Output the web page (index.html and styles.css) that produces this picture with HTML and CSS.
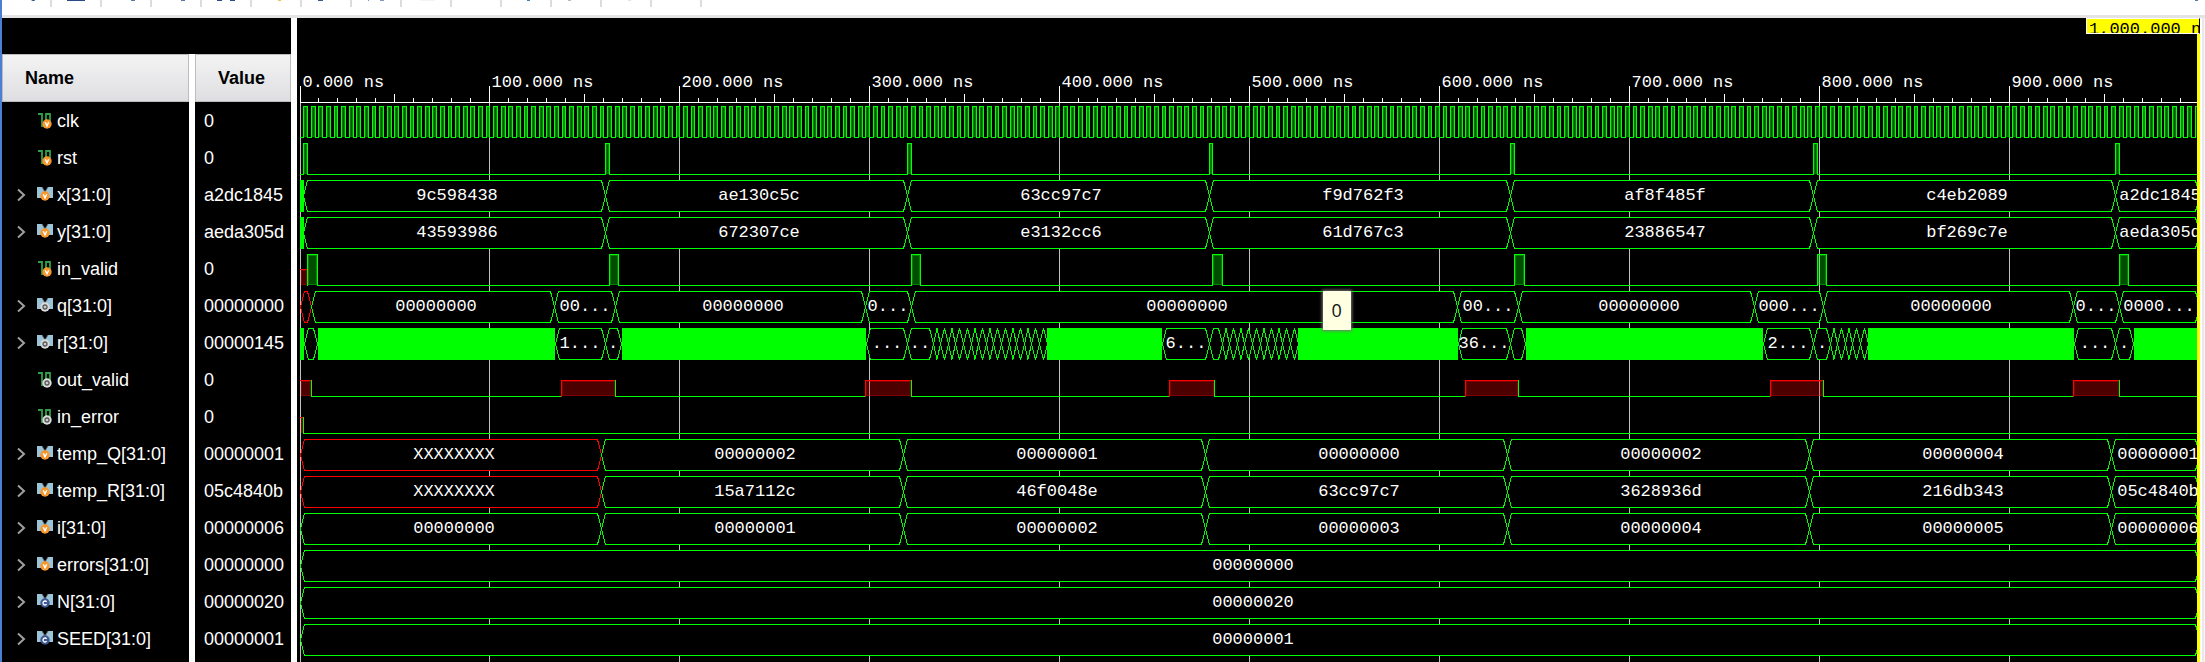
FILE: index.html
```html
<!DOCTYPE html>
<html lang="en">
<head>
<meta charset="utf-8">
<title>Waveform viewer</title>
<link rel="stylesheet" href="styles.css">
</head>
<body>
<svg class="defs" aria-hidden="true">
  <symbol id="chevron" viewBox="0 0 10 14"><path d="M1 1.500 7 7 1 12.500" fill="none" stroke="#a0a0a0" stroke-width="2"/></symbol>
  <symbol id="scalar" viewBox="0 0 18 18"><path d="M1 2H5V14H9V2H13V12" fill="none" stroke="#2fa048" stroke-width="1.800"/></symbol>
  <symbol id="bus" viewBox="0 0 18 18"><path d="M0 1H5L8 6 11 1H16V12H12V9H4V12H0Z" fill="#9cc4d8"/><path d="M5 1 8 6 11 1" fill="none" stroke="#5b6a72"/></symbol>
  <symbol id="badge-var" viewBox="0 0 10 10"><circle cx="5" cy="5" r="4.700" fill="#f7962a"/><path d="M3.300 3.200 5 6.900 6.700 3.200" fill="none" stroke="#fff" stroke-width="1.400"/></symbol>
  <symbol id="badge-net" viewBox="0 0 10 10"><circle cx="5" cy="5" r="4.700" fill="#dadada"/><circle cx="5" cy="5" r="2" fill="#ccc" stroke="#5a5a5a" stroke-width="1.300"/></symbol>
  <symbol id="badge-const" viewBox="0 0 10 10"><circle cx="5" cy="5" r="4.700" fill="#3d5890"/><path d="M6.600 3.800A2 2 0 1 0 6.600 6.200" fill="none" stroke="#fff" stroke-width="1.300"/></symbol>
</svg>
<div class="viewer">
  <div class="toolbar" role="toolbar" aria-label="Waveform tools">
    <button class="tool" aria-label="Search"><svg class="glyph" viewBox="0 0 48 1"><path d="M29.500.5H33" stroke="#6f88b8"/><path d="M30.500.5H32" stroke="#2b4a8a"/></svg></button>
    <button class="tool" aria-label="Save"><svg class="glyph" viewBox="0 0 48 1"><path d="M15 .5H33" stroke="#2b4a8a"/></svg></button>
    <button class="tool" aria-label="Zoom in"><svg class="glyph" viewBox="0 0 48 1"><path d="M29 .5H33" stroke="#5b76ac"/></svg></button>
    <button class="tool" aria-label="Zoom out"><svg class="glyph" viewBox="0 0 48 1"><path d="M29 .5H33" stroke="#5b76ac"/></svg></button>
    <button class="tool" aria-label="Zoom fit"><svg class="glyph" viewBox="0 0 48 1"><path d="M15 .5H20M28 .5H33" stroke="#2b4a8a"/></svg></button>
    <button class="tool" aria-label="Zoom to cursor"><svg class="glyph" viewBox="0 0 48 1"><path d="M26 .5H29" stroke="#e6c75a"/></svg></button>
    <button class="tool" aria-label="Previous transition"><svg class="glyph" viewBox="0 0 48 1"><path d="M16 .5H21" stroke="#3d5994"/></svg></button>
    <button class="tool" aria-label="Next transition"><svg class="glyph" viewBox="0 0 48 1"><path d="M16 .5H17M28 .5H32" stroke="#8496bd"/></svg></button>
    <button class="tool" aria-label="Add marker"><svg class="glyph" viewBox="0 0 48 1"><path d="M18 .5H33" stroke="#f4f4f4"/></svg></button>
    <button class="tool" aria-label="Previous marker"></button>
    <button class="tool" aria-label="Next marker"><svg class="glyph" viewBox="0 0 48 1"><path d="M25 .5H28" stroke="#3a84c0"/></svg></button>
    <button class="tool" aria-label="Swap cursors"><svg class="glyph" viewBox="0 0 48 1"><path d="M16 .5H19" stroke="#bbb"/></svg></button>
    <button class="tool" aria-label="Snap"><svg class="glyph" viewBox="0 0 48 1"><path d="M26 .5H29" stroke="#e4e4e4"/></svg></button>
    <button class="tool" aria-label="Float rulers"></button>
    <button class="tool settings" aria-label="Settings"><svg class="glyph" viewBox="0 0 48 1"><path d="M40 .5H43" stroke="#5b76ac"/></svg></button>
  </div>
  <main class="content">
    <section class="signals">
      <table class="signal-table">
        <thead><tr><th class="name-head">Name</th><th class="value-head">Value</th></tr></thead>
        <tbody id="signal-rows"></tbody>
      </table>
    </section>
    <section class="waves" id="waves" aria-label="Waveforms">
      <svg class="plot" id="plot"></svg>
      <div class="cursor-label"><span>1,000.000 ns</span></div>
      <div class="tooltip" role="tooltip">0</div>
    </section>
    <div class="edge"></div>
  </main>
</div>
<script src="waves.js"></script>
</body>
</html>
```
FILE: styles.css
```css
* { box-sizing: border-box; }
body {
  margin: 0;
  background: #fff;
  font: 18px/20px "Liberation Sans", Arial, sans-serif;
  overflow: hidden;
}
.defs { position: absolute; width: 0; height: 0; }
.viewer {
  display: flex;
  flex-direction: column;
  height: 100vh;
  border-left: 2px solid #4a7fd4;
}
.toolbar {
  display: flex;
  align-items: flex-start;
  height: 18px;
  flex: none;
  background: #fff;
  border-bottom: 3px solid #e4e4e4;
}
.tool {
  width: 50px;
  height: 7px;
  padding: 0;
  border: 0;
  border-right: 2px solid #dcdcdc;
  background: none;
  display: flex;
}
.settings { margin-left: auto; border-right: 0; }
.glyph { display: block; width: 48px; height: 1px; }
.content { display: flex; flex: 1; min-height: 0; }
.signals {
  flex: none;
  width: 289px;
  background: #000;
  padding-top: 36px;
  display: flex;
}
.signal-table {
  width: 100%;
  height: 100%;
  border-collapse: separate;
  border-spacing: 0;
  table-layout: fixed;
  color: #fff;
}
.signal-table th {
  height: 48px;
  padding: 0 0 0 23px;
  text-align: left;
  color: #000;
  background: linear-gradient(#f4f4f4, #dedee2);
  box-shadow: inset 0 0 0 1px #bcbcbc;
}
.signal-table .name-head {
  width: 193px;
  border-right: 6px solid #fff;
  background-clip: padding-box;
}
.signal-table td { padding: 0 0 0 9px; height: 37px; white-space: nowrap; }
.signal-table td:first-child { border-right: 6px solid #fff; padding-left: 15px; }
.signal-table .filler td { height: auto; padding: 0; }
.signal { display: flex; align-items: center; }
.expand {
  width: 10px;
  height: 14px;
  padding: 0;
  border: 0;
  background: none;
  margin-right: 10px;
}
.expand svg { display: block; width: 10px; height: 14px; }
.no-expand { visibility: hidden; }
.icon { width: 18px; height: 18px; margin-right: 2px; flex: none; }
.waves {
  position: relative;
  flex: 1;
  min-width: 0;
  margin-left: 6px;
  background: #000;
  overflow: hidden;
}
.plot { display: block; width: 100%; height: 100%; }
.plot line, .plot path, .plot polygon, .plot rect { shape-rendering: crispEdges; }
.plot text {
  font: 17px "Liberation Mono", monospace;
  fill: #fff;
}
.cursor-label {
  position: absolute;
  top: 0;
  right: 0;
  width: 114px;
  height: 16px;
  padding-left: 2px;
  overflow: hidden;
  background: #ff0;
  border: 1px solid #fff;
  border-right-color: #000;
  color: #000;
  font: 17px/22px "Liberation Mono", monospace;
  white-space: nowrap;
}
.tooltip {
  position: absolute;
  left: 53.9%;
  top: 273px;
  width: 28px;
  height: 39px;
  background: #ffffe1;
  box-shadow: 0 0 3px 1px #777;
  font: 18px/39px "Open Sans", sans-serif;
  text-align: center;
  color: #111;
}
.edge { flex: none; width: 5px; border-left: 2px solid #fff; background: #e9e9e9; border-right: 1px solid #f8f8f8; }
```
FILE: waves.js
```js
// Positions are display columns of the full view; FULL columns span 1000 ns.
const FULL = 1899;
const TOP = 84;      // first signal row, from the top of the plot
const ROW = 37;
const LEFT = 3;

const clock = [];
for (let t = 2; t < 1000; t += 4) {
  clock.push([Math.floor(t * 1.899), Math.floor((t + 2) * 1.899)]);
}

// Runs of short bus values between two columns.
function run(from, to, count) {
  const out = [];
  for (let i = 0; i < count; i++) {
    out.push(['hex', from + (to - from) * i / count, from + (to - from) * (i + 1) / count, '']);
  }
  return out;
}
function bus(stops, labels, firstKind) {
  return labels.map((label, i) => [i === 0 && firstKind ? firstKind : 'hex', stops[i], stops[i + 1], label]);
}

const inputStops = [3, 305, 607, 909, 1210, 1513, 1815, FULL];
const tempStops = [0, 301, 603, 905, 1207, 1509, 1811, FULL];
const outRed = [[0, 11], [261, 315], [565, 611], [869, 914], [1165, 1218], [1470, 1523], [1773, 1819]];

const signals = [
  { name: 'clk', value: '0', badge: 'var', high: clock },
  { name: 'rst', value: '0', badge: 'var', high: [[3, 7], [305, 309], [607, 611], [909, 912], [1210, 1214], [1513, 1517], [1815, 1819]] },
  { name: 'x[31:0]', value: 'a2dc1845', badge: 'var', segs: [['solid', 0, 4],
    ...bus(inputStops, ['9c598438', 'ae130c5c', '63cc97c7', 'f9d762f3', 'af8f485f', 'c4eb2089', 'a2dc1845'])] },
  { name: 'y[31:0]', value: 'aeda305d', badge: 'var', segs: [['solid', 0, 4],
    ...bus(inputStops, ['43593986', '672307ce', 'e3132cc6', '61d767c3', '23886547', 'bf269c7e', 'aeda305d'])] },
  { name: 'in_valid', value: '0', badge: 'var', unknown: [[0, 7]],
    high: [[7, 17], [309, 318], [611, 620], [912, 922], [1214, 1224], [1517, 1526], [1819, 1828]] },
  { name: 'q[31:0]', value: '00000000', badge: 'net', segs: bus(
    [0, 11, 254, 315, 565, 611, 1157, 1218, 1454, 1523, 1773, 1819, FULL],
    ['', '00000000', '00...', '00000000', '0...', '00000000', '00...', '00000000', '000...', '00000000', '0...', '0000...'], 'bad') },
  { name: 'r[31:0]', value: '00000145', badge: 'net', segs: [
    ['solid', 0, 4], ['hex', 4, 17, ''], ['solid', 18, 255],
    ['hex', 255, 305, '1...'], ['hex', 305, 321, '.'], ['solid', 322, 566],
    ['hex', 566, 607, '...'], ['hex', 607, 633, '..'], ...run(633, 747, 15), ['solid', 747, 862],
    ['hex', 862, 909, '6...'], ['hex', 909, 922, ''], ...run(922, 998, 10), ['solid', 998, 1158],
    ['hex', 1158, 1210, '36...'], ['hex', 1210, 1225, ''], ['solid', 1226, 1463],
    ['hex', 1463, 1513, '2...'], ['hex', 1513, 1530, '.'], ...run(1530, 1568, 5), ['solid', 1568, 1774],
    ['hex', 1774, 1815, '...'], ['hex', 1815, 1833, '.'], ['solid', 1834, FULL]] },
  { name: 'out_valid', value: '0', badge: 'net', unknown: outRed, high: [] },
  { name: 'in_error', value: '0', badge: 'net', unknown: [[0, 3]], high: [] },
  { name: 'temp_Q[31:0]', value: '00000001', badge: 'var', segs: bus(tempStops,
    ['XXXXXXXX', '00000002', '00000001', '00000000', '00000002', '00000004', '00000001'], 'bad') },
  { name: 'temp_R[31:0]', value: '05c4840b', badge: 'var', segs: bus(tempStops,
    ['XXXXXXXX', '15a7112c', '46f0048e', '63cc97c7', '3628936d', '216db343', '05c4840b'], 'bad') },
  { name: 'i[31:0]', value: '00000006', badge: 'var', segs: bus(tempStops,
    ['00000000', '00000001', '00000002', '00000003', '00000004', '00000005', '00000006']) },
  { name: 'errors[31:0]', value: '00000000', badge: 'var', segs: bus([0, FULL], ['00000000']) },
  { name: 'N[31:0]', value: '00000020', badge: 'const', segs: bus([0, FULL], ['00000020']) },
  { name: 'SEED[31:0]', value: '00000001', badge: 'const', segs: bus([0, FULL], ['00000001']) }
];

document.getElementById('signal-rows').innerHTML = signals.map(s => {
  const isBus = !!s.segs;
  const at = isBus ? 'x="3" y="5"' : 'x="5" y="7"';
  return `<tr><td><div class="signal">
    <button class="expand${isBus ? '' : ' no-expand'}" aria-label="Expand ${s.name}"><svg><use href="#chevron"/></svg></button>
    <svg class="icon" viewBox="0 0 18 18"><use href="#${isBus ? 'bus' : 'scalar'}" width="18" height="18"/><use href="#badge-${s.badge}" ${at} width="10" height="10"/></svg>
    <span>${s.name}</span></div></td><td>${s.value}</td></tr>`;
}).join('') + '<tr class="filler"><td></td><td></td></tr>';

const GREEN = '#0f0';
const RED = '#f00';

function line(x1, y1, x2, y2, color) {
  return `<path d="M${x1} ${y1}L${x2} ${y2}" stroke="${color}"/>`;
}

function pulse(a, b, top, bottom, color) {
  const w = b - a - 1;
  const h = bottom - top - 1;
  return `<rect x="${a + 1}" y="${top + 1}" width="${w}" height="${h}" fill="${color}" fill-opacity=".3"/>` +
    (w > 1 ? `<rect x="${a + 1.5}" y="${top + 1.5}" width="${w - 1}" height="${h - 1}" fill="none" stroke="${color}" stroke-opacity=".3"/>` : '');
}

function drawScalar(s, y, X, end) {
  const top = y + 4;
  const mid = y + 19;
  const bottom = y + 35;
  const events = [
    ...(s.unknown || []).map(e => [...e, true]),
    ...s.high.map(e => [...e, false])
  ].sort((p, q) => p[0] - q[0]);
  let svg = '';
  let low = X(0);
  for (const [from, to, bad] of events) {
    const a = X(from);
    const b = Math.min(X(to), end);
    if (a > low) svg += line(low, bottom + .5, a + 1, bottom + .5, GREEN);
    const peak = bad ? mid : top;
    const color = bad ? RED : GREEN;
    svg += pulse(a, b, peak, bottom, color);
    if (from > 0) svg += line(a + .5, peak, a + .5, bottom + 1, color);
    svg += line(a, peak + .5, b, peak + .5, color);
    svg += line(b + .5, peak, b + .5, bottom + 1, GREEN);
    low = b;
  }
  return svg + line(low, bottom + .5, end, bottom + .5, GREEN);
}

function drawBus(s, y, X, end) {
  const top = y + 4.5;
  const bottom = y + 35.5;
  const mid = y + 20;
  let svg = '';
  let labels = '';
  for (const [kind, from, to, label] of s.segs) {
    const a = X(from);
    const b = X(to);
    if (kind === 'solid') {
      svg += `<rect x="${a}" y="${y + 4}" width="${b - a}" height="32" fill="${GREEN}"/>`;
      continue;
    }
    const slant = Math.min(4, (b - a) / 2);
    const l = a + .5;
    const r = b + .5;
    svg += `<polygon points="${l},${mid} ${l + slant},${top} ${r - slant},${top} ${r},${mid} ${r - slant},${bottom} ${l + slant},${bottom}" fill="#000" stroke="${kind === 'bad' ? RED : GREEN}"/>`;
    if (label) {
      const nudge = label.endsWith('.') ? 0 : 3;
      labels += `<text x="${Math.round((a + b) / 2) + nudge}" y="${y + 24}" text-anchor="middle">${label}</text>`;
    }
  }
  return svg + labels;
}

function draw() {
  const host = document.getElementById('waves');
  const width = host.clientWidth;
  const height = host.clientHeight;
  const scale = (width - LEFT - 1) / FULL;
  const X = c => LEFT + Math.floor(c * scale);
  const end = width - 3;
  let svg = '';
  for (let t = 0; t < 1000; t += 10) {
    const x = X(t * 1.899) + .5;
    const tick = t % 100 === 0 ? 68 : t % 50 === 0 ? 76 : 80;
    if (t % 100 === 0) {
      svg += line(x, TOP, x, height, '#c0c0c0');
      svg += `<text x="${x + 2}" y="69">${t}.000 ns</text>`;
    }
    svg += line(x, tick, x, TOP, '#fff');
  }
  svg += line(LEFT, TOP + .5, end, TOP + .5, '#fff');
  signals.forEach((s, i) => {
    const y = TOP + i * ROW;
    svg += s.segs ? drawBus(s, y, X, end) : drawScalar(s, y, X, end);
  });
  svg += `<rect x="${end}" y="16" width="3" height="${height}" fill="#ff0"/>`;
  document.getElementById('plot').innerHTML = svg;
}

draw();
window.addEventListener('resize', draw);
```
